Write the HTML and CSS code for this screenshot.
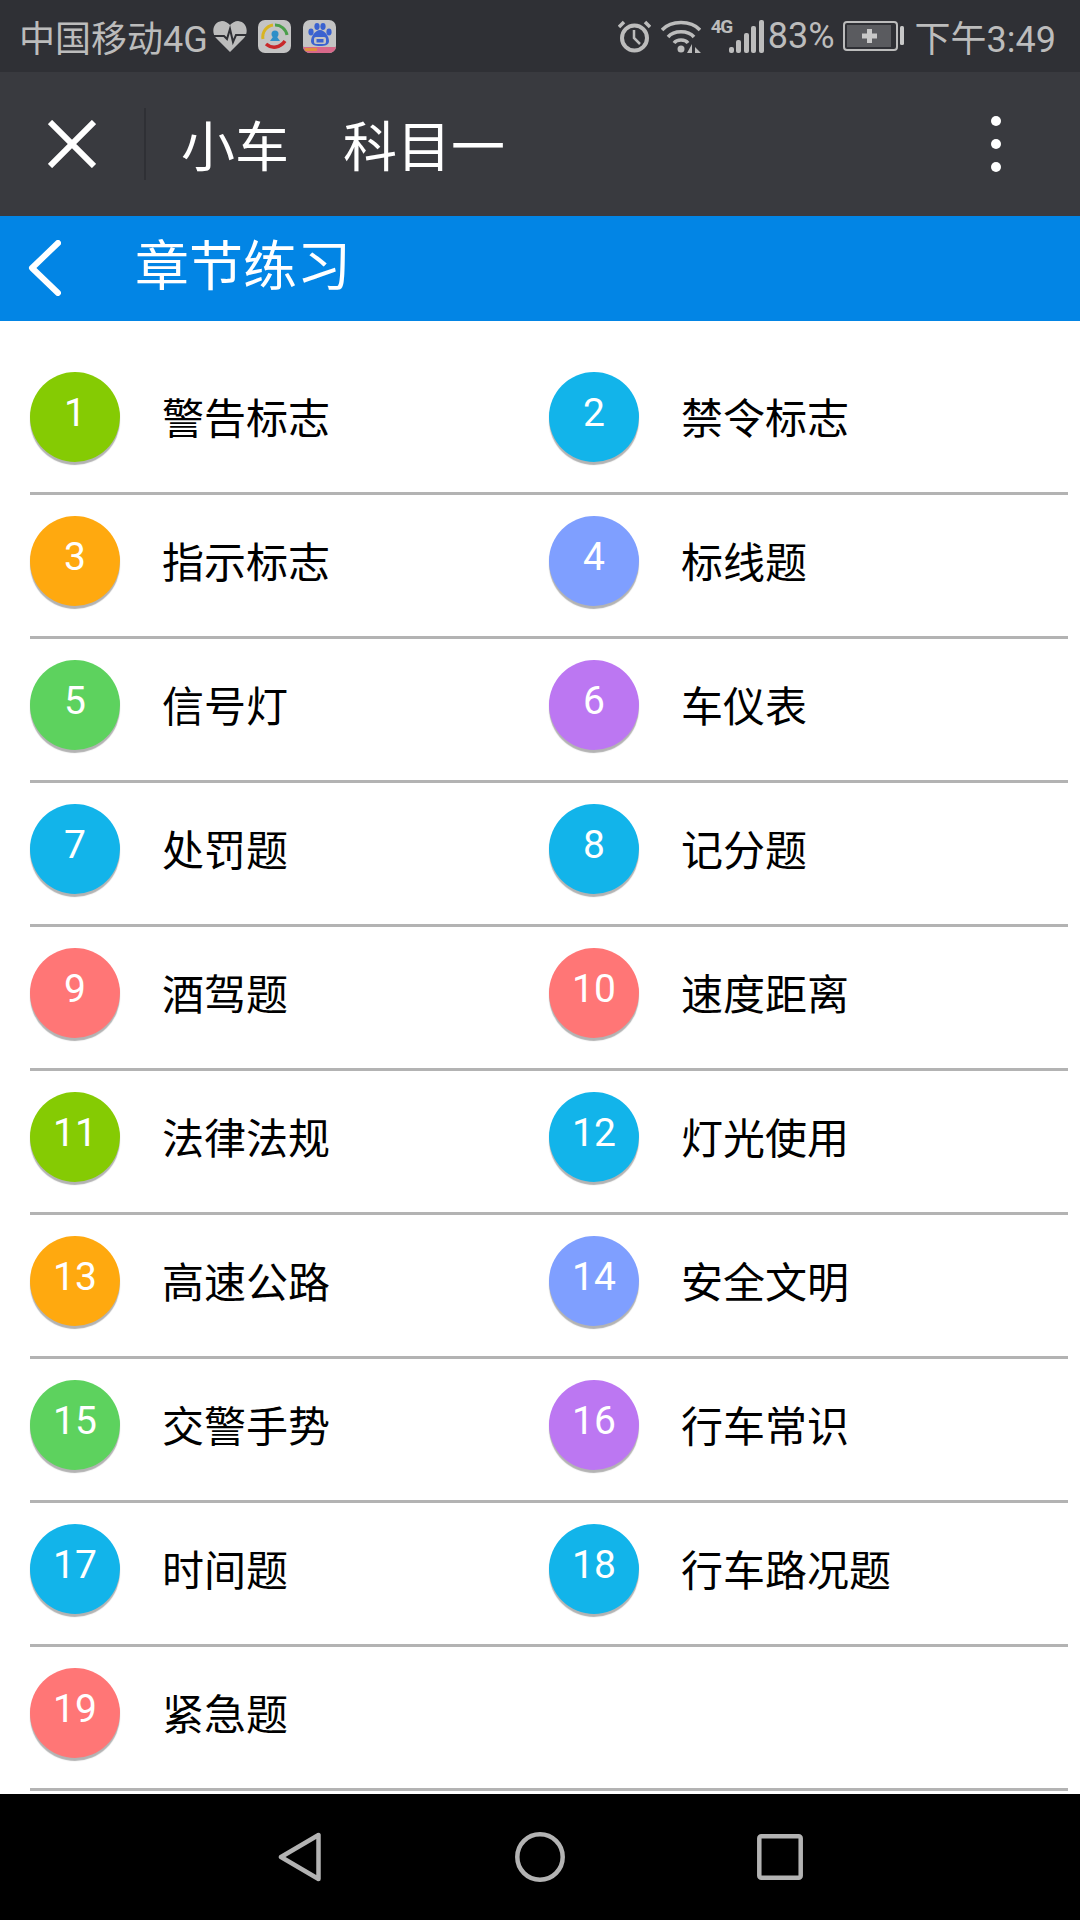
FILE: index.html
```html
<!DOCTYPE html>
<html lang="en">
    <head>
        <meta charset="UTF-8">
        <title>章节练习</title>
        <link rel="stylesheet" href="styles.css">
    </head>

    <body>
        <div class="status">
            <span class="carrier">中国移动4G</span>
            <svg class="ic-heart" width="34" height="31" viewBox="0 0 34 31">
                <path d="M17 31 L3 17 C-2 11 0 1 9 0 C12 0 15 2 17 4 C19 2 22 0 25 0 C34 1 36 11 31 17 Z" fill="#bcbcbc"/>
                <path d="M1 15 H11 L14 18 L17 8 L20 21 L23 14 H33" fill="none" stroke="#2f3035" stroke-width="2"/>
            </svg>
            <svg class="ic-app" width="33" height="33" viewBox="0 0 33 33">
                <rect width="33" height="33" rx="7" fill="#c4c4c4"/>
                <path d="M5 19 A12 12 0 0 1 15 5" fill="none" stroke="#d8b422" stroke-width="3"/>
                <path d="M17 5 A12 12 0 0 1 29 15" fill="none" stroke="#4a9e4a" stroke-width="3"/>
                <path d="M8 24 C14 29 22 28 27 21" fill="none" stroke="#c8282a" stroke-width="3.5"/>
                <circle cx="17" cy="14" r="3.5" fill="#2f8fc8"/>
                <path d="M12 21 L17 14 L22 21 Z" fill="#2f8fc8"/>
            </svg>
            <svg class="ic-app" width="33" height="33" viewBox="0 0 33 33">
                <rect width="33" height="33" rx="7" fill="#c4c4c4"/>
                <path d="M0 27 H33 V26 A7 7 0 0 1 26 33 H7 A7 7 0 0 1 0 26 Z" fill="#d8688a"/>
                <rect x="2" y="28" width="12" height="3" fill="#e09040"/>
                <g fill="#3a62d0">
                    <ellipse cx="8" cy="12" rx="2.6" ry="3.4"/>
                    <ellipse cx="14" cy="6.5" rx="2.6" ry="3.4"/>
                    <ellipse cx="20" cy="6.5" rx="2.6" ry="3.4"/>
                    <ellipse cx="26" cy="12" rx="2.6" ry="3.4"/>
                    <path d="M17 10 C22 10 26 17 26 21 C26 25 22 26 17 26 C12 26 8 25 8 21 C8 17 12 10 17 10 Z"/>
                </g>
                <rect x="11" y="17" width="12" height="7" rx="2" fill="#c4c4c4"/>
                <rect x="13.500" y="19" width="7" height="3.500" fill="#3a62d0"/>
            </svg>
            <div class="status-right">
                <svg class="ic-alarm" width="33" height="33" viewBox="0 0 33 33">
                    <circle cx="16.500" cy="18" r="12.500" fill="none" stroke="#bcbcbc" stroke-width="4"/>
                    <path d="M16 10 V18 L22 24" fill="none" stroke="#bcbcbc" stroke-width="2.500"/>
                    <path d="M1 7 L6 2 M32 7 L27 2" stroke="#bcbcbc" stroke-width="3.500"/>
                </svg>
                <svg class="ic-wifi" width="40" height="33" viewBox="0 0 40 33">
                    <g fill="none" stroke="#bcbcbc" stroke-width="3.500">
                        <path d="M1 10 C10 0 30 0 39 10"/>
                        <path d="M7 17 C13 10 27 10 33 17"/>
                        <path d="M13 23 C16 19 24 19 27 23"/>
                    </g>
                    <circle cx="20" cy="29" r="3.500" fill="#bcbcbc"/>
                    <path d="M31 24 V33 H26 Z M34 24 V33 H40 L34 27 Z" fill="#bcbcbc"/>
                </svg>
                <div class="signal-wrap">
                    <span class="net">4G</span>
                    <div class="signal">
                        <i class="bar-1"></i><i class="bar-2"></i><i class="bar-3"></i><i class="bar-4"></i><i class="bar-5"></i>
                    </div>
                </div>
                <span class="pct">83%</span>
                <svg class="ic-batt" width="61" height="30" viewBox="0 0 61 30">
                    <rect x="1" y="1" width="53" height="28" rx="3" fill="none" stroke="#bcbcbc" stroke-width="2"/>
                    <rect x="4" y="4" width="44" height="22" fill="#5a5b5f"/>
                    <path d="M19 15 H34 M26.500 8 V22" stroke="#c8c8c8" stroke-width="5"/>
                    <rect x="57" y="5" width="4" height="19" rx="1.500" fill="#c8c8c8"/>
                </svg>
                <span class="time">下午3:49</span>
            </div>
        </div>

        <div class="toolbar">
            <svg class="ic-close" width="48" height="48" viewBox="0 0 48 48">
                <path d="M2 2 L46 46 M46 2 L2 46" stroke="#fff" stroke-width="6"/>
            </svg>
            <div class="divider"></div>
            <div class="title">小车　科目一</div>
            <div class="more"><i></i><i></i><i></i></div>
        </div>

        <div class="subbar">
            <svg class="ic-back" width="34" height="56" viewBox="0 0 34 56">
                <path d="M31 3 L5 28 L31 53" fill="none" stroke="#fff" stroke-width="6" stroke-linecap="round" stroke-linejoin="round"/>
            </svg>
            <div class="subtitle">章节练习</div>
        </div>

        <div class="list">
            <div class="item"><span class="num lime">1</span><span class="name">警告标志</span></div>
            <div class="item"><span class="num sky">2</span><span class="name">禁令标志</span></div>
            <div class="item"><span class="num orange">3</span><span class="name">指示标志</span></div>
            <div class="item"><span class="num peri">4</span><span class="name">标线题</span></div>
            <div class="item"><span class="num green">5</span><span class="name">信号灯</span></div>
            <div class="item"><span class="num purple">6</span><span class="name">车仪表</span></div>
            <div class="item"><span class="num sky">7</span><span class="name">处罚题</span></div>
            <div class="item"><span class="num sky">8</span><span class="name">记分题</span></div>
            <div class="item"><span class="num red">9</span><span class="name">酒驾题</span></div>
            <div class="item"><span class="num red">10</span><span class="name">速度距离</span></div>
            <div class="item"><span class="num lime">11</span><span class="name">法律法规</span></div>
            <div class="item"><span class="num sky">12</span><span class="name">灯光使用</span></div>
            <div class="item"><span class="num orange">13</span><span class="name">高速公路</span></div>
            <div class="item"><span class="num peri">14</span><span class="name">安全文明</span></div>
            <div class="item"><span class="num green">15</span><span class="name">交警手势</span></div>
            <div class="item"><span class="num purple">16</span><span class="name">行车常识</span></div>
            <div class="item"><span class="num sky">17</span><span class="name">时间题</span></div>
            <div class="item"><span class="num sky">18</span><span class="name">行车路况题</span></div>
            <div class="item"><span class="num red">19</span><span class="name">紧急题</span></div>
            <div class="item"></div>
        </div>

        <div class="navbar">
            <svg width="44" height="50" viewBox="0 0 44 50">
                <path d="M40.500 3 V47 L3 25 Z" fill="none" stroke="#b3b3b3" stroke-width="4.500" stroke-linejoin="round"/>
            </svg>
            <svg width="50" height="50" viewBox="0 0 50 50">
                <circle cx="25" cy="25" r="22.700" fill="none" stroke="#b3b3b3" stroke-width="4.500"/>
            </svg>
            <svg width="46" height="46" viewBox="0 0 46 46">
                <rect x="2.300" y="2.300" width="41.400" height="41.400" rx="2" fill="none" stroke="#b3b3b3" stroke-width="4.500"/>
            </svg>
        </div>
    </body>
</html>
```

FILE: styles.css
```css
html {
    background-color: #ffffff;
}

body {
    margin: 0;
    width: 1080px;
    height: 1920px;
    display: flex;
    flex-direction: column;
    overflow: hidden;
    font-family: "Roboto", "Noto Sans CJK SC", sans-serif;
}

/* status bar */
.status {
    height: 72px;
    background-color: #2f3035;
    color: #bcbcbc;
    font-size: 36px;
    display: flex;
    align-items: center;
    padding: 0 24px 0 19px;
}

.carrier {
    margin-right: 5px;
}

.ic-heart {
    margin-right: 11px;
}

.ic-app {
    margin-right: 12px;
}

.status-right {
    margin-left: auto;
    display: flex;
    align-items: center;
}

.ic-alarm {
    margin-right: 10px;
}

.ic-wifi {
    margin-right: 10px;
}

.signal-wrap {
    width: 53px;
    height: 34px;
    display: flex;
    margin-right: 4px;
}

.net {
    font-size: 19px;
    font-weight: 700;
    line-height: 15px;
    width: 18px;
    letter-spacing: -1.5px;
}

.signal {
    display: flex;
    align-items: flex-end;
    gap: 2.5px;
    flex: 1;
}

.signal i {
    display: block;
    width: 5px;
    background-color: #bcbcbc;
    border-radius: 2px;
}

.bar-1 { height: 6px; }
.bar-2 { height: 13px; }
.bar-3 { height: 20px; }
.bar-4 { height: 27px; }
.bar-5 { height: 33px; }

.pct {
    margin-right: 8px;
}

.ic-batt {
    margin-right: 11px;
}

/* title bars */
.toolbar {
    height: 144px;
    background-color: #393a3f;
    display: flex;
    align-items: center;
    color: #ffffff;
}

.ic-close {
    margin-left: 48px;
}

.divider {
    width: 2px;
    height: 72px;
    background-color: #2f3035;
    margin-left: 48px;
}

.title {
    font-size: 54px;
    margin-left: 35px;
    margin-bottom: 2px;
}

.more {
    margin-left: auto;
    margin-right: 79px;
    display: flex;
    flex-direction: column;
    gap: 13px;
}

.more i {
    display: block;
    width: 10px;
    height: 10px;
    border-radius: 50%;
    background-color: #ffffff;
}

.subbar {
    height: 105px;
    background-color: #0285e5;
    display: flex;
    align-items: center;
    color: #ffffff;
}

.ic-back {
    margin-left: 27px;
    margin-bottom: 2px;
}

.subtitle {
    font-size: 54px;
    margin-left: 74px;
    margin-bottom: 13px;
}

/* chapters */
.list {
    flex: 1;
    padding: 30px 12px 0 30px;
    display: grid;
    grid-template-columns: 519px 519px;
    grid-auto-rows: 144px;
}

.item {
    border-bottom: 3px solid #b3b3b3;
    padding-top: 21px;
    display: flex;
    align-items: flex-start;
    box-sizing: border-box;
}

.num {
    width: 90px;
    height: 90px;
    border-radius: 50%;
    color: #ffffff;
    font-size: 39px;
    line-height: 82px;
    text-align: center;
    box-shadow: 0 3px 1px #b3b3b3;
}

.name {
    margin-left: 42px;
    font-size: 42px;
    line-height: 96px;
    color: #000000;
}

.lime { background-color: #85cb03; }
.sky { background-color: #12b4ea; }
.orange { background-color: #ffa90f; }
.peri { background-color: #7f9fff; }
.green { background-color: #5dd25e; }
.purple { background-color: #bc77f2; }
.red { background-color: #ff7676; }

/* android nav */
.navbar {
    height: 126px;
    background-color: #000000;
    display: grid;
    grid-template-columns: 278px 44px 193px 50px 192px 46px;
    align-items: center;
}

.navbar svg:nth-child(1) { grid-column: 2; }
.navbar svg:nth-child(2) { grid-column: 4; }
.navbar svg:nth-child(3) { grid-column: 6; }
```
